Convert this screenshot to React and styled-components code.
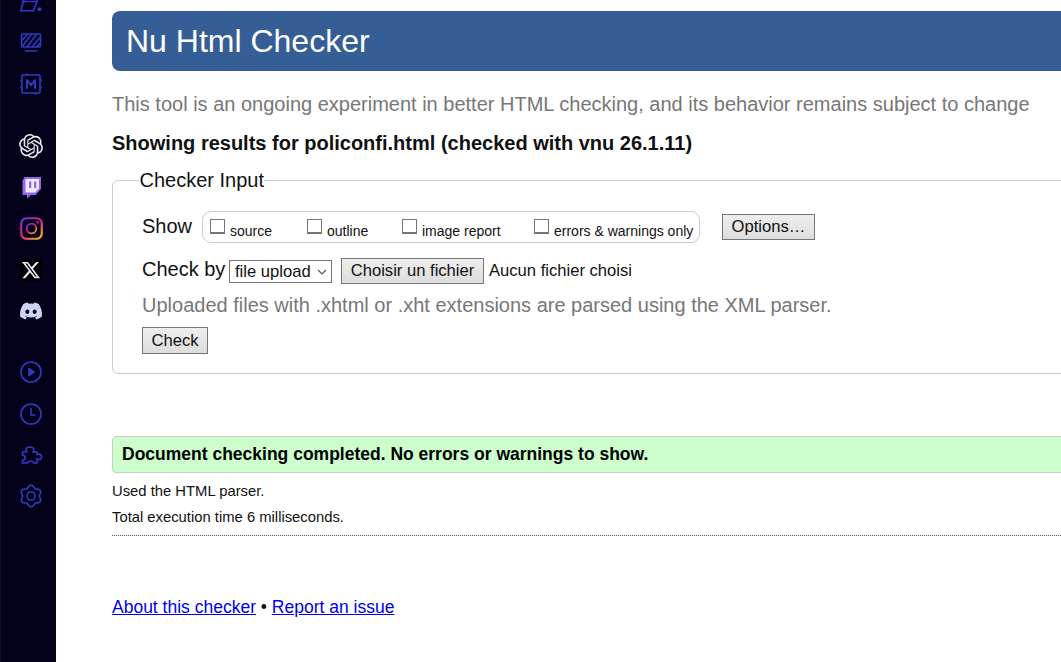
import React from "react";
import styled, { createGlobalStyle } from "styled-components";
import { SiOpenai } from "react-icons/si";
import { FaDiscord, FaXTwitter } from "react-icons/fa6";

const Global = createGlobalStyle`
  html, body { margin: 0; padding: 0; height: 100%; overflow: hidden; background: #fff; }
  #root { height: 100%; }
  * { box-sizing: border-box; }
`;

const Page = styled.div`
  display: flex;
  height: 662px;
  width: 1061px;
  overflow: hidden;
  font-family: "Liberation Sans", Arial, sans-serif;
  color: #111;
`;

const Rail = styled.nav`
  flex: none;
  width: 56px;
  height: 662px;
  background: #03021a;
  border-left: 1px solid #0a0a36;
  display: flex;
  flex-direction: column;
  align-items: center;
  overflow: hidden;
  padding-left: 5px;
`;

const RailGroup = styled.div`
  display: flex;
  flex-direction: column;
  align-items: center;
  width: 100%;
  margin-top: ${(p) => p.$top}px;
`;

const RailItem = styled.div`
  height: 41.33px;
  width: 100%;
  display: flex;
  align-items: center;
  justify-content: center;
  color: ${(p) => p.$color || "#2f3bc4"};
`;

const XBadge = styled.span`
  display: flex;
  align-items: center;
  justify-content: center;
  width: 22px;
  height: 22px;
  background: #000;
`;

const Main = styled.main`
  flex: none;
  width: 1125px;
  padding-left: 56px;
  padding-top: 11px;
`;

const Banner = styled.h1`
  margin: 0;
  height: 60px;
  background: #365e96;
  color: #fff;
  border-radius: 8px;
  padding-left: 14px;
  font-size: 32px;
  font-weight: 400;
  line-height: 60px;
`;

const Intro = styled.p`
  margin: 22px 0 0;
  font-size: 20px;
  line-height: 23px;
  color: #777;
`;

const Showing = styled.h2`
  margin: 16px 0 0;
  font-size: 20px;
  font-weight: 700;
  line-height: 23px;
  color: #111;
`;

const Fields = styled.fieldset`
  margin: 14px 0 0;
  padding: 19px 29px 19px;
  height: 205px;
  border: 1px solid #ccc;
  border-radius: 6px;
  min-width: 0;
`;

const Legend = styled.legend`
  font-size: 20px;
  line-height: 23px;
  padding: 0 0 0 1px;
  margin-left: -3.5px;
  color: #111;
`;

const Row = styled.div`
  display: flex;
  align-items: center;
`;

const ShowLabel = styled.span`
  font-size: 20px;
  line-height: 23px;
  width: 60px;
  padding-bottom: 2px;
  height: 25px;
`;

const Group = styled.div`
  display: flex;
  align-items: flex-start;
  height: 32px;
  width: 498px;
  border: 1px solid #ccc;
  border-radius: 9px;
  padding: 7px 0 0 7px;
`;

const Opt = styled.label`
  display: flex;
  align-items: flex-start;
  gap: 5px;
  width: ${(p) => p.$w}px;
  flex: none;
`;

const OptText = styled.span`
  font-size: 14px;
  line-height: 16px;
  margin-top: 4px;
  color: #111;
`;

const Box = styled.span`
  display: block;
  flex: none;
  width: 15px;
  height: 15px;
  border: 1px solid #767676;
  border-bottom-width: 2px;
  background: #fff;
`;

const Btn = styled.button`
  font-family: inherit;
  font-size: 16.6px;
  height: 26px;
  padding: 0 9px;
  color: #111;
  border: 1px solid #767676;
  background: linear-gradient(#eee, #ddd);
  border-radius: 0;
`;

const OptionsBtn = styled(Btn)`
  margin-left: 22px;
  width: 93px;
  padding: 0;
`;

const CheckRow = styled(Row)`
  margin-top: 15px;
  height: 26px;
`;

const ByLabel = styled.span`
  font-size: 20px;
  line-height: 23px;
  width: 87px;
  height: 26px;
  padding-bottom: 3px;
`;

const FakeSelect = styled.span`
  display: flex;
  align-items: center;
  justify-content: space-between;
  width: 103px;
  height: 23px;
  margin-top: 1px;
  border: 1px solid #767676;
  padding: 0 4px 0 5px;
  font-size: 16.6px;
  color: #111;
`;

const FileBtn = styled(Btn)`
  margin-left: 9px;
  width: 143px;
  padding: 0;
`;

const NoFile = styled.span`
  font-size: 16.6px;
  margin-left: 5px;
`;

const Hint = styled.p`
  margin: 10px 0 0;
  font-size: 20px;
  line-height: 23px;
  color: #777;
`;

const SubmitBtn = styled(Btn)`
  display: block;
  margin-top: 10px;
  height: 27px;
  width: 66px;
  padding: 0;
`;

const Success = styled.div`
  margin-top: 62px;
  height: 37px;
  background: #ccffcc;
  border: 1px solid #ccc;
  border-radius: 4px;
  padding-left: 9px;
  font-size: 17.5px;
  font-weight: 700;
  line-height: 35px;
  color: #000;
`;

const Note = styled.p`
  margin: 10px 0 0;
  font-size: 14.8px;
  line-height: 16px;
  color: #111;
`;

const Rule = styled.hr`
  margin: 10px 0 0;
  border: 0;
  border-top: 1px dotted #555;
`;

const Footer = styled.p`
  margin: 61px 0 0;
  font-size: 17.5px;
  line-height: 21px;
  color: #111;
  a { color: #00e; text-decoration: underline; }
`;

const Stroke = ({ children, size = 24, width = 1.6 }) => (
  <svg width={size} height={size} viewBox="0 0 24 24" fill="none" stroke="currentColor" strokeWidth={width} strokeLinecap="round" strokeLinejoin="round">
    {children}
  </svg>
);

const Twitch = () => (
  <svg width="24" height="24" viewBox="0 0 24 24">
    <path d="M5.500 2H22V14L16.500 20H12L8 23.500V20H3.500V6z" fill="#9467ee" />
    <path d="M6.500 4H20V13.500L16 17.500H6.500z" fill="#efe8ff" />
    <rect x="10" y="6.500" width="2.300" height="6.500" fill="#9467ee" />
    <rect x="15" y="6.500" width="2.300" height="6.500" fill="#9467ee" />
  </svg>
);

const Instagram = () => (
  <svg width="23" height="23" viewBox="0 0 24 24" fill="none">
    <defs>
      <linearGradient id="ig" x1="0.1" y1="0" x2="0.9" y2="1">
        <stop offset="0" stopColor="#7a2be0" />
        <stop offset="0.5" stopColor="#e0247a" />
        <stop offset="1" stopColor="#fdb022" />
      </linearGradient>
    </defs>
    <rect x="1.300" y="1.300" width="21.400" height="21.400" rx="5.500" stroke="url(#ig)" strokeWidth="2.300" />
    <circle cx="12" cy="12" r="5" stroke="url(#ig)" strokeWidth="1.800" />
    <circle cx="18.300" cy="5.700" r="1.200" fill="#d9309a" />
  </svg>
);

const flowerPath = () => {
  const pts = [];
  for (let i = 0; i < 120; i += 1) {
    const t = (i / 120) * Math.PI * 2;
    const r = 9.6 + 1.2 * Math.cos(6 * t);
    pts.push(`${(12 + r * Math.sin(t)).toFixed(2)} ${(12 - r * Math.cos(t)).toFixed(2)}`);
  }
  return `M${pts.join("L")}z`;
};

export default function App() {
  return (
    <Page>
      <Global />
      <Rail>
        <RailGroup $top={-19}>
          <RailItem>
            <Stroke>
              <path d="M6 6H20L14.500 20.800H1.800z" />
              <path d="M3.500 11.500H18" />
              <circle cx="20.500" cy="19.300" r="1.200" fill="currentColor" />
            </Stroke>
          </RailItem>
          <RailItem>
            <Stroke>
              <rect x="2.500" y="3" width="19" height="13" rx="1.500" />
              <path d="M3.500 9L8 4M3.500 15L12 4M8.500 15.500L17 4M13.500 15.500L20.500 7M18 15.500l2.500-3" />
              <path d="M6.500 20H17.500" />
            </Stroke>
          </RailItem>
          <RailItem>
            <Stroke>
              <rect x="3" y="3" width="18" height="18" rx="1" />
              <path d="M1.800 8.500v1.500M1.800 14.500v1.500M22.200 7.500v1.500M22.200 14.500v1.500M7 1.800h1.500M16 22.200h1.500" strokeWidth="1.100" />
              <path d="M8 16V8.200l4 5 4-5V16" strokeWidth="2" />
            </Stroke>
          </RailItem>
        </RailGroup>
        <RailGroup $top={20}>
          <RailItem $color="#e8e8ee"><SiOpenai size={24} /></RailItem>
          <RailItem><Twitch /></RailItem>
          <RailItem><Instagram /></RailItem>
          <RailItem $color="#e8e8ee"><XBadge><FaXTwitter size={20} /></XBadge></RailItem>
          <RailItem $color="#cfd3f5"><FaDiscord size={24} /></RailItem>
        </RailGroup>
        <RailGroup $top={20}>
          <RailItem>
            <Stroke>
              <circle cx="12" cy="12" r="10" />
              <path d="M10 8.500l5 3.500-5 3.500z" fill="currentColor" />
            </Stroke>
          </RailItem>
          <RailItem>
            <Stroke>
              <circle cx="12" cy="12" r="10" />
              <path d="M12 6.500V13h4" />
            </Stroke>
          </RailItem>
          <RailItem>
            <Stroke>
              <path d="M3.500 20v-2.500c1.600-.3 2.700-1.300 2.700-2.700 0-1.400-1.200-2.300-2.700-2.700V9h4.300c-.6-.7-.9-1.400-.9-2.200C6.900 5.100 8.300 4 10.800 4s4 1.100 4 2.800c0 .8-.3 1.500-.9 2.200H18v2.600c.5-.4 1.200-.6 1.900-.6 1.500 0 2.600 1.100 2.600 2.700s-1.100 2.700-2.600 2.700c-.7 0-1.400-.2-1.900-.6V20h-3.500c0-1.200-1-1.800-3-1.800s-3 .6-3 1.800z" />
            </Stroke>
          </RailItem>
          <RailItem>
            <Stroke>
              <circle cx="12" cy="12" r="4" />
              <path d={flowerPath()} />
            </Stroke>
          </RailItem>
        </RailGroup>
      </Rail>
      <Main>
        <Banner>Nu Html Checker</Banner>
        <Intro>This tool is an ongoing experiment in better HTML checking, and its behavior remains subject to change</Intro>
        <Showing>Showing results for policonfi.html (checked with vnu 26.1.11)</Showing>
        <Fields>
          <Legend>Checker Input</Legend>
          <Row>
            <ShowLabel>Show</ShowLabel>
            <Group>
              <Opt $w={97}><Box /><OptText>source</OptText></Opt>
              <Opt $w={95}><Box /><OptText>outline</OptText></Opt>
              <Opt $w={132}><Box /><OptText>image report</OptText></Opt>
              <Opt $w={164}><Box /><OptText>errors &amp; warnings only</OptText></Opt>
            </Group>
            <OptionsBtn>Options…</OptionsBtn>
          </Row>
          <CheckRow>
            <ByLabel>Check by</ByLabel>
            <FakeSelect>
              file upload
              <svg width="10" height="6" viewBox="0 0 10 6" fill="none" stroke="#555" strokeWidth="1.200"><path d="M1 1l4 4 4-4" /></svg>
            </FakeSelect>
            <FileBtn>Choisir un fichier</FileBtn>
            <NoFile>Aucun fichier choisi</NoFile>
          </CheckRow>
          <Hint>Uploaded files with .xhtml or .xht extensions are parsed using the XML parser.</Hint>
          <SubmitBtn>Check</SubmitBtn>
        </Fields>
        <Success>Document checking completed. No errors or warnings to show.</Success>
        <Note>Used the HTML parser.</Note>
        <Note>Total execution time 6 milliseconds.</Note>
        <Rule />
        <Footer><a href="#about">About this checker</a> • <a href="#issue">Report an issue</a></Footer>
      </Main>
    </Page>
  );
}
